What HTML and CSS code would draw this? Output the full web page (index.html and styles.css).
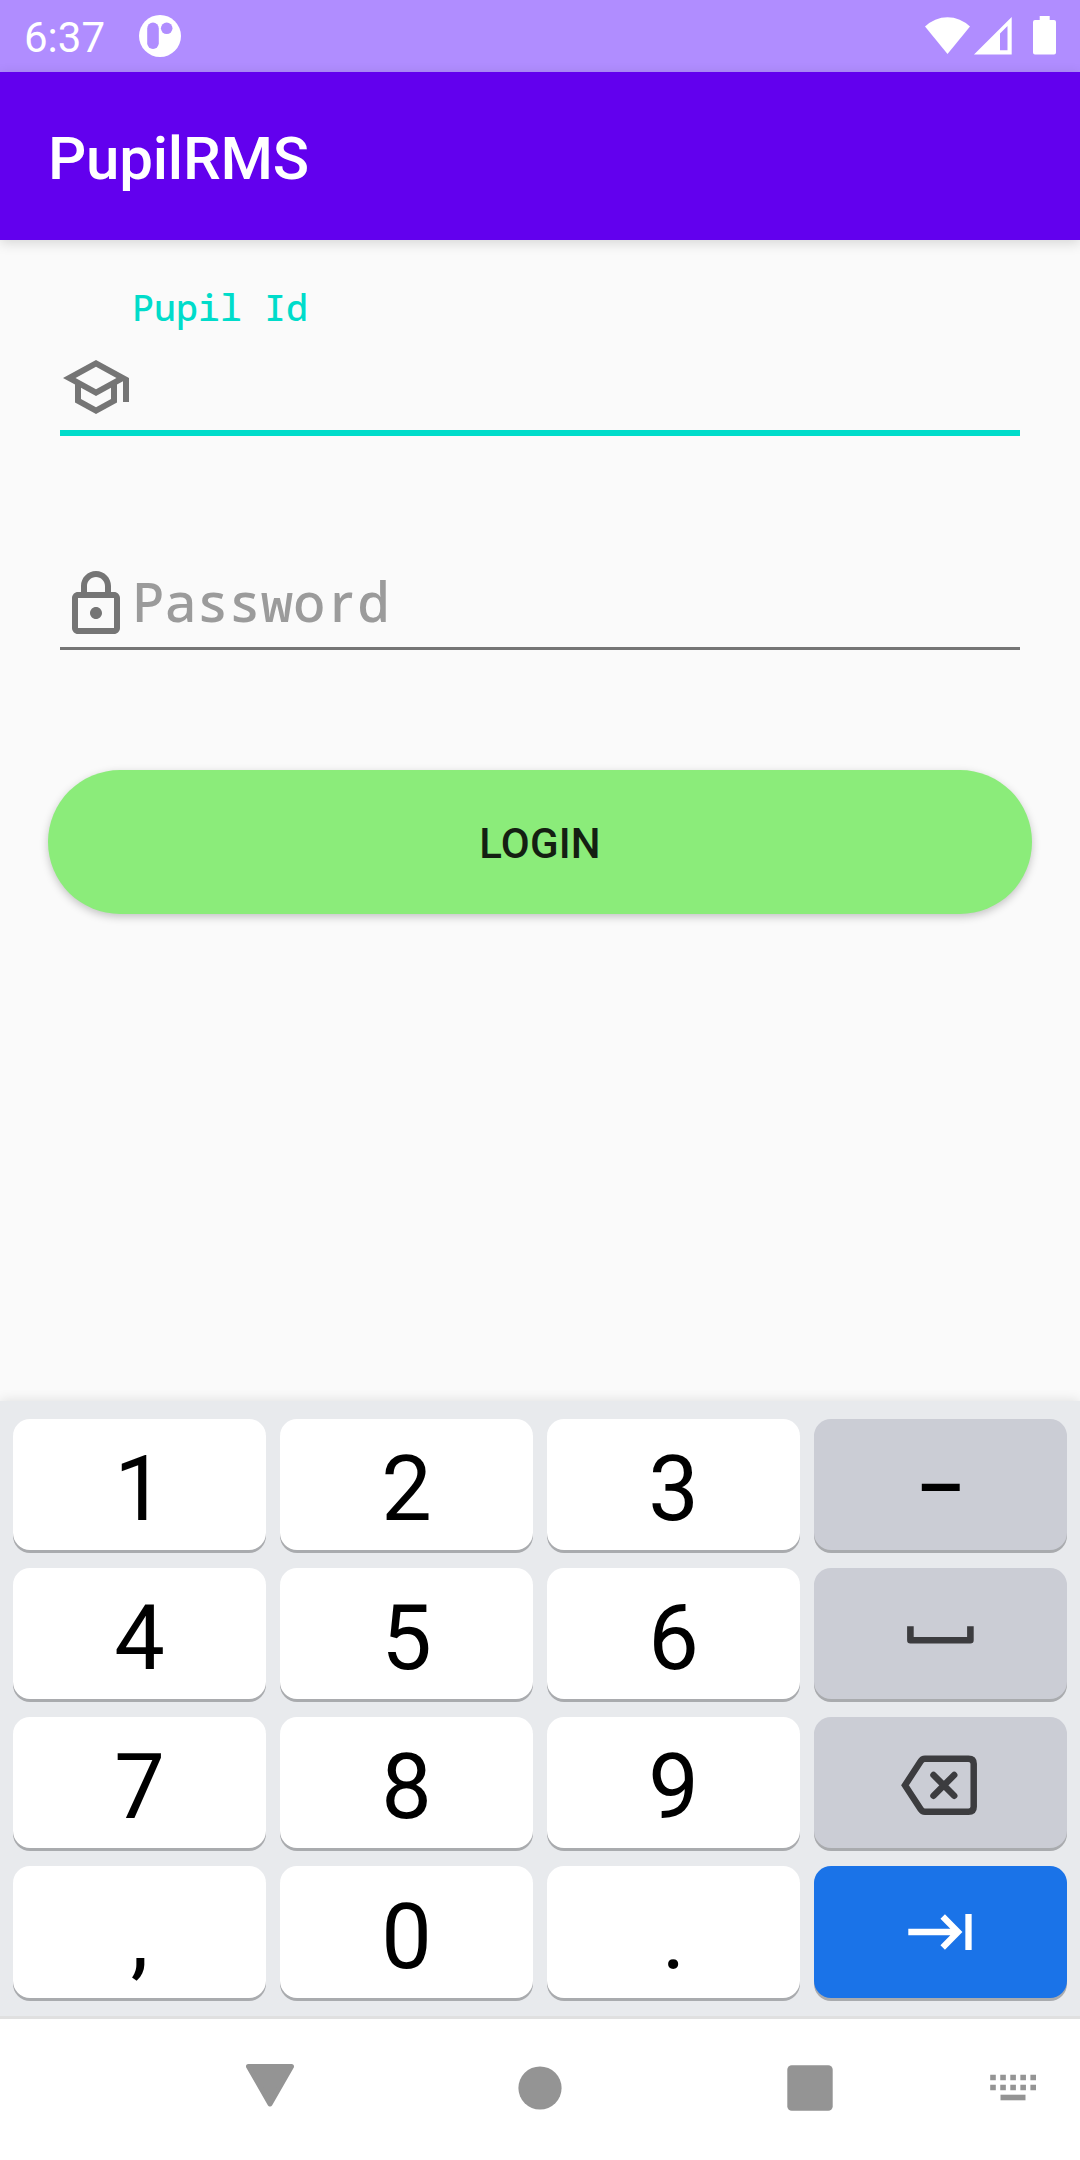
FILE: index.html
```html
<!DOCTYPE html>
<html lang="en">
<head>
<meta charset="utf-8">
<title>PupilRMS</title>
<link rel="stylesheet" href="styles.css">
</head>
<body>
<div class="screen">
  <div class="status">
    <span class="clock">6:37</span>
    <svg class="notif" width="42" height="42" viewBox="0 0 42 42"><circle cx="21" cy="21" r="21" fill="#fff"/><rect x="8.2" y="7.6" width="11.6" height="26.4" rx="5.8" fill="#b08dff"/><circle cx="27.7" cy="13.3" r="5.8" fill="#b08dff"/></svg>
    <svg class="system" width="134" height="42" viewBox="924 15 134 42" fill="#fff">
      <path d="M925 26.5A32 32 0 0 1 970 26.5L947.5 54Z"/>
      <path fill-rule="evenodd" d="M974 54.5L1011.7 17V54.5ZM1000 33.5V50.3H1007.5V26Z"/>
      <path d="M1039.7 16H1049.7V20H1054a2 2 0 0 1 2 2V52.5a2 2 0 0 1-2 2H1035a2 2 0 0 1-2-2V22a2 2 0 0 1 2-2H1039.7Z"/>
    </svg>
  </div>
  <header class="appbar"><h1 class="title">PupilRMS</h1></header>
  <main class="form">
    <div class="field field-active">
      <label class="float-label">Pupil Id</label>
      <div class="input-row">
        <svg width="72" height="72" viewBox="0 0 24 24" fill="#757575"><path d="M12 3L1 9l4 2.18v6L12 21l7-3.82v-6l2-1.09V17h2V9L12 3zm6.82 6L12 12.72 5.18 9 12 5.28 18.82 9zM17 15.99l-5 2.73-5-2.73v-3.72L12 15l5-2.73v3.72z"/></svg>
      </div>
    </div>
    <div class="field field-idle">
      <div class="input-row">
        <svg width="72" height="72" viewBox="0 0 24 24" fill="#757575"><path d="M12 17c1.1 0 2-.9 2-2s-.9-2-2-2-2 .9-2 2 .9 2 2 2zm6-9h-1V6c0-2.760-2.240-5-5-5S7 3.240 7 6v2H6c-1.100 0-2 .9-2 2v10c0 1.100.9 2 2 2h12c1.100 0 2-.9 2-2V10c0-1.100-.9-2-2-2zM9 6c0-1.660 1.340-3 3-3s3 1.340 3 3v2H9V6zm9 14H6V10h12v10z"/></svg>
        <span class="hint">Passwo<span class="plain">r</span>d</span>
      </div>
    </div>
    <button class="login" type="button">LOGIN</button>
  </main>
  <div class="keyboard">
    <div class="key">1</div><div class="key">2</div><div class="key">3</div>
    <div class="key key-alt"><span class="dash">–</span></div>
    <div class="key">4</div><div class="key">5</div><div class="key">6</div>
    <div class="key key-alt key-icon"><svg width="253" height="131" viewBox="814 1568 253 131"><path d="M910.400 1629.500V1640.300H970.400V1629.500" fill="none" stroke="#3c3c3f" stroke-width="6.600" stroke-linejoin="round" stroke-linecap="square"/></svg></div>
    <div class="key">7</div><div class="key">8</div><div class="key">9</div>
    <div class="key key-alt key-icon"><svg width="253" height="131" viewBox="814 1717 253 131" fill="none" stroke="#3c3c3f" stroke-width="6.500"><path d="M905 1785.300L920.500 1761.500Q922.200 1758.700 925 1758.700H968.500Q973.700 1758.700 973.700 1763.700V1806.700Q973.700 1811.700 968.500 1811.700H925Q922.200 1811.700 920.500 1809Z"/><path d="M933.500 1775L954.200 1795.700M954.200 1775L933.500 1795.700" stroke-linecap="round"/></svg></div>
    <div class="key">,</div><div class="key">0</div><div class="key">.</div>
    <div class="key key-next key-icon"><svg width="253" height="132" viewBox="814 1866 253 132" fill="none" stroke="#fff" stroke-width="6.300"><path d="M908.300 1932H957M942.700 1916.500L958 1932L942.700 1947.500M968.500 1914V1950"/></svg></div>
  </div>
  <nav class="navbar">
    <svg width="48" height="48" viewBox="0 0 48 48"><path d="M2.500 2.500H45.500L24 40Z" fill="#949494" stroke="#949494" stroke-width="5" stroke-linejoin="round"/></svg>
    <svg width="48" height="48" viewBox="0 0 48 48"><circle cx="24" cy="24" r="21.600" fill="#949494"/></svg>
    <svg width="48" height="48" viewBox="0 0 48 48"><rect x="1.300" y="1.300" width="45.400" height="45.400" rx="4.500" fill="#949494"/></svg>
    <svg width="48" height="48" viewBox="0 0 48 48" fill="none" stroke="#949494" stroke-width="5.600"><path d="M1.200 13.500H47M1.200 23.500H47" stroke-dasharray="5.600 4.450"/><path d="M11.500 33.500H36.500"/></svg>
  </nav>
</div>
</body>
</html>
```
FILE: styles.css
```css
* { box-sizing: border-box; }
body { margin: 0; background: #fafafa; font-family: Roboto, sans-serif; }
svg { display: block; flex: none; }
.screen { width: 1080px; height: 2160px; display: flex; flex-direction: column; overflow: hidden; }
.status { height: 72px; flex: none; display: flex; align-items: flex-start; background: #b08dff; color: #fff; padding: 15px 22px 0 24px; }
.clock { font-size: 42px; line-height: 45px; width: 115px; }
.system { margin-left: auto; }
.appbar { height: 168px; flex: none; display: flex; align-items: center; padding: 5px 48px 0; background: #6200ee; box-shadow: 0 3px 12px rgba(0,0,0,.15); }
.title { margin: 0; font-size: 60px; font-weight: 500; line-height: 72px; letter-spacing: -.2px; color: #fff; }
.form { flex: 1; padding: 46px 48px 0; }
.field { margin: 0 12px; font-family: "Noto Sans Mono", "DejaVu Sans Mono", monospace; font-weight: 500; }
.field-active { height: 150px; border-bottom: 6px solid #00dcca; }
.float-label { display: block; height: 65px; padding-left: 72px; font-size: 36.700px; line-height: 42px; color: #00dcca; }
.input-row { display: flex; align-items: flex-start; height: 72px; }
.field-idle { margin-top: 132px; height: 82px; border-bottom: 3px solid #757575; }
.hint { font-size: 54px; line-height: 66px; letter-spacing: -.2px; color: #9b9b9b; }
.plain { display: inline-block; width: 32px; padding-left: 5px; line-height: 1; font-family: "Noto Sans", sans-serif; }
.login { display: block; width: 984px; height: 144px; margin-top: 120px; padding: 3px 0 0; border: 0; border-radius: 72px; background: #8bec7a; color: #141f12; font: 500 42px/50px Roboto, sans-serif; letter-spacing: .2px; box-shadow: 0 3px 8px rgba(0,0,0,.22); }
.keyboard { flex: none; height: 618px; display: grid; grid-template-columns: repeat(4, 253px); grid-template-rows: 131px 131px 131px 132px; gap: 18px 14px; padding: 18px 13px 0; background: #e8eaed; border-bottom: 3px solid #e0e0e0; box-shadow: 0 0 12px rgba(0,0,0,.12); }
.key { display: flex; align-items: center; justify-content: center; padding-top: 11px; border-radius: 17px; background: #fff; color: #000; font-size: 90px; line-height: 100px; box-shadow: 0 3px 0 #a9abae; }
.key-alt { background: #cbcdd5; }
.key-next { background: #1a73e8; }
.key-icon { padding-top: 0; }
.dash { font-size: 76px; font-weight: 500; padding-bottom: 5px; }
.navbar { flex: none; height: 141px; display: grid; grid-template-columns: 270px 270px 270px 135px; justify-items: center; padding: 45px 0 0 135px; background: #fff; }
```
